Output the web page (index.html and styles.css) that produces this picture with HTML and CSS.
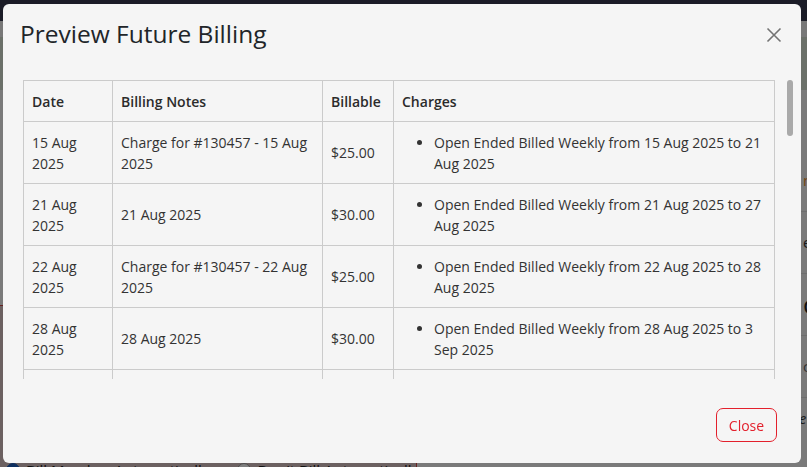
FILE: index.html
```html
<!DOCTYPE html>
<html lang="en">
<head>
<meta charset="utf-8">
<title>Preview Future Billing</title>
<link rel="stylesheet" href="styles.css">
</head>
<body>
<div class="page">
  <div class="topbar"></div>
  <div class="strip"></div>
  <div class="banner"></div>
  <div class="content">
    <div class="main">
      <div class="line"></div>
      <div class="main-gap"></div>
      <div class="bill-options">
        <span class="radio on"></span><span class="opt">Bill Member Automatically</span>
        <span class="radio"></span><span class="opt">Don't Bill Automatically</span>
        <span class="radio"></span><span class="opt">Never Bill</span>
      </div>
    </div>
    <div class="side">
      <div class="side-row">n</div>
      <div class="side-row">e</div>
      <div class="side-row big">ct</div>
      <div class="side-row">co</div>
      <div class="side-note">They grow slowly, and are paid</div>
    </div>
  </div>
</div>

<div class="backdrop"></div>

<div class="modal" role="dialog" aria-labelledby="modal-title">
  <div class="modal-header">
    <h2 class="modal-title" id="modal-title">Preview Future Billing</h2>
    <button class="btn-x" type="button" aria-label="Close">
      <svg width="16" height="16" viewBox="0 0 16 16"><path d="M1.5 1.5 L14.5 14.5 M14.5 1.5 L1.5 14.5" stroke="#737373" stroke-width="1.6" fill="none"/></svg>
    </button>
  </div>
  <div class="modal-body">
    <div class="table-scroll">
      <div class="table-viewport">
        <table class="billing">
          <colgroup><col class="c-date"><col class="c-notes"><col class="c-bill"><col></colgroup>
          <thead>
            <tr><th>Date</th><th>Billing Notes</th><th>Billable</th><th>Charges</th></tr>
          </thead>
          <tbody>
            <tr><td>15 Aug 2025</td><td>Charge for #130457 - 15 Aug 2025</td><td>$25.00</td><td><ul><li>Open Ended Billed Weekly from 15 Aug 2025 to 21 Aug 2025</li></ul></td></tr>
            <tr><td>21 Aug 2025</td><td>21 Aug 2025</td><td>$30.00</td><td><ul><li>Open Ended Billed Weekly from 21 Aug 2025 to 27 Aug 2025</li></ul></td></tr>
            <tr><td>22 Aug 2025</td><td>Charge for #130457 - 22 Aug 2025</td><td>$25.00</td><td><ul><li>Open Ended Billed Weekly from 22 Aug 2025 to 28 Aug 2025</li></ul></td></tr>
            <tr><td>28 Aug 2025</td><td>28 Aug 2025</td><td>$30.00</td><td><ul><li>Open Ended Billed Weekly from 28 Aug 2025 to 3 Sep 2025</li></ul></td></tr>
            <tr><td>29 Aug 2025</td><td>Charge for #130457 - 29 Aug 2025</td><td>$25.00</td><td><ul><li>Open Ended Billed Weekly from 29 Aug 2025 to 4 Sep 2025</li></ul></td></tr>
            <tr><td>4 Sep 2025</td><td>4 Sep 2025</td><td>$30.00</td><td><ul><li>Open Ended Billed Weekly from 4 Sep 2025 to 10 Sep 2025</li></ul></td></tr>
            <tr><td>5 Sep 2025</td><td>Charge for #130457 - 5 Sep 2025</td><td>$25.00</td><td><ul><li>Open Ended Billed Weekly from 5 Sep 2025 to 11 Sep 2025</li></ul></td></tr>
            <tr><td>11 Sep 2025</td><td>11 Sep 2025</td><td>$30.00</td><td><ul><li>Open Ended Billed Weekly from 11 Sep 2025 to 17 Sep 2025</li></ul></td></tr>
            <tr><td>12 Sep 2025</td><td>Charge for #130457 - 12 Sep 2025</td><td>$25.00</td><td><ul><li>Open Ended Billed Weekly from 12 Sep 2025 to 18 Sep 2025</li></ul></td></tr>
            <tr><td>18 Sep 2025</td><td>18 Sep 2025</td><td>$30.00</td><td><ul><li>Open Ended Billed Weekly from 18 Sep 2025 to 24 Sep 2025</li></ul></td></tr>
          </tbody>
        </table>
      </div>
      <div class="scrollbar"><div class="thumb"></div></div>
    </div>
  </div>
  <div class="modal-footer">
    <button class="btn-close" type="button">Close</button>
  </div>
</div>
</body>
</html>
```
FILE: styles.css
```css
* { box-sizing: border-box; }

html, body {
  margin: 0;
  height: 100%;
  overflow: hidden;
}

body {
  font-family: "Open Sans", "Liberation Sans", sans-serif;
  color: #212529;
  background: #f2f2f2;
}

/* page underneath the dialog */
.page {
  height: 100%;
  display: flex;
  flex-direction: column;
  background: #f4f4f4;
}

.topbar {
  height: 21px;
  background: #36384f;
}

.strip {
  height: 16px;
  background: #f0f0f0;
}

.banner {
  height: 53px;
  background: #d6e0d3;
}

.content {
  flex: 1;
  display: flex;
  min-height: 0;
}

.main {
  width: 416px;
  display: flex;
  flex-direction: column;
  overflow: hidden;
  background: #f4f4f4;
}

.line {
  height: 216px;
  border-bottom: 1px solid #c44;
}

.main-gap {
  flex: 1;
  background: #d9c3c3;
}

.bill-options {
  height: 24px;
  display: flex;
  align-items: flex-start;
  gap: 6px;
  padding: 17px 0 0 6px;
  overflow: hidden;
  background: #d9c3c3;
  font-size: 15px;
  line-height: 20px;
  color: #222;
  white-space: nowrap;
}

.radio {
  flex: none;
  width: 14px;
  height: 14px;
  margin-top: 3px;
  border-radius: 50%;
  border: 1px solid #999;
  background: #fff;
}

.radio.on {
  background: #1d5fbf;
  border-color: #1d5fbf;
}

.opt { margin-right: 22px; }

.side {
  flex: 1;
  min-width: 0;
  display: flex;
  flex-direction: column;
  overflow: hidden;
  background: #f4f4f4;
  border-left: 1px solid #c44;
}

.side-row {
  height: 62px;
  border-bottom: 1px solid #ddd;
  padding: 20px 0 0 386px;
  font-size: 15px;
  color: #e28a2a;
  white-space: nowrap;
}

.side-row:nth-child(1) { margin-top: 60px; }
.side-row:nth-child(2) { color: #333; }
.side-row.big { font-size: 26px; padding-top: 12px; color: #222; }
.side-row:nth-child(4) { color: #666; }

.side-note {
  padding: 8px 0 0 230px;
  font-style: italic;
  font-size: 14px;
  line-height: 26px;
  color: #333;
  white-space: nowrap;
}

.backdrop {
  position: fixed;
  inset: 0;
  background: rgba(0, 0, 0, 0.5);
}

/* dialog */
.modal {
  position: fixed;
  left: 3px;
  top: 4px;
  width: 798px;
  background: #f5f5f5;
  border-radius: 6px;
  display: flex;
  flex-direction: column;
}

.modal-header {
  display: flex;
  align-items: center;
  justify-content: space-between;
  padding: 15px 19px 16px 17px;
}

.modal-title {
  margin: 0;
  font-size: 24.5px;
  line-height: 29px;
  font-weight: 400;
  color: #212529;
}

.btn-x {
  width: 16px;
  height: 16px;
  margin-top: 2px;
  padding: 0;
  border: 0;
  background: none;
  display: flex;
}

.modal-body {
  padding: 16px 8px 0 20px;
}

/* table area with its own slim scrollbar */
.table-scroll {
  height: 299px;
  display: flex;
}

.table-viewport {
  flex: 1;
  overflow: hidden;
}

.scrollbar {
  flex: none;
  width: 6px;
}

.scrollbar .thumb {
  height: 56px;
  border-radius: 3px;
  background: #a9a9a9;
}

.billing {
  width: 752px;
  border-collapse: collapse;
  table-layout: fixed;
  font-size: 14px;
  line-height: 21px;
  color: #333;
}

.c-date { width: 89px; }
.c-notes { width: 210px; }
.c-bill { width: 71px; }

.billing th,
.billing td {
  border: 1px solid #cbcbcb;
  padding: 9.5px 8px;
  vertical-align: middle;
  text-align: left;
}

.billing th {
  font-weight: 600;
  color: #2b2b2b;
}

.billing ul {
  margin: 0;
  padding-left: 32px;
}

.modal-footer {
  display: flex;
  justify-content: flex-end;
  padding: 29px 24px 21px 0;
}

.btn-close {
  height: 34px;
  width: 61px;
  padding: 0;
  border: 1px solid #e3202c;
  border-radius: 7px;
  background: transparent;
  color: #e3202c;
  font-family: "Open Sans", "Liberation Sans", sans-serif;
  font-size: 14px;
}
```
